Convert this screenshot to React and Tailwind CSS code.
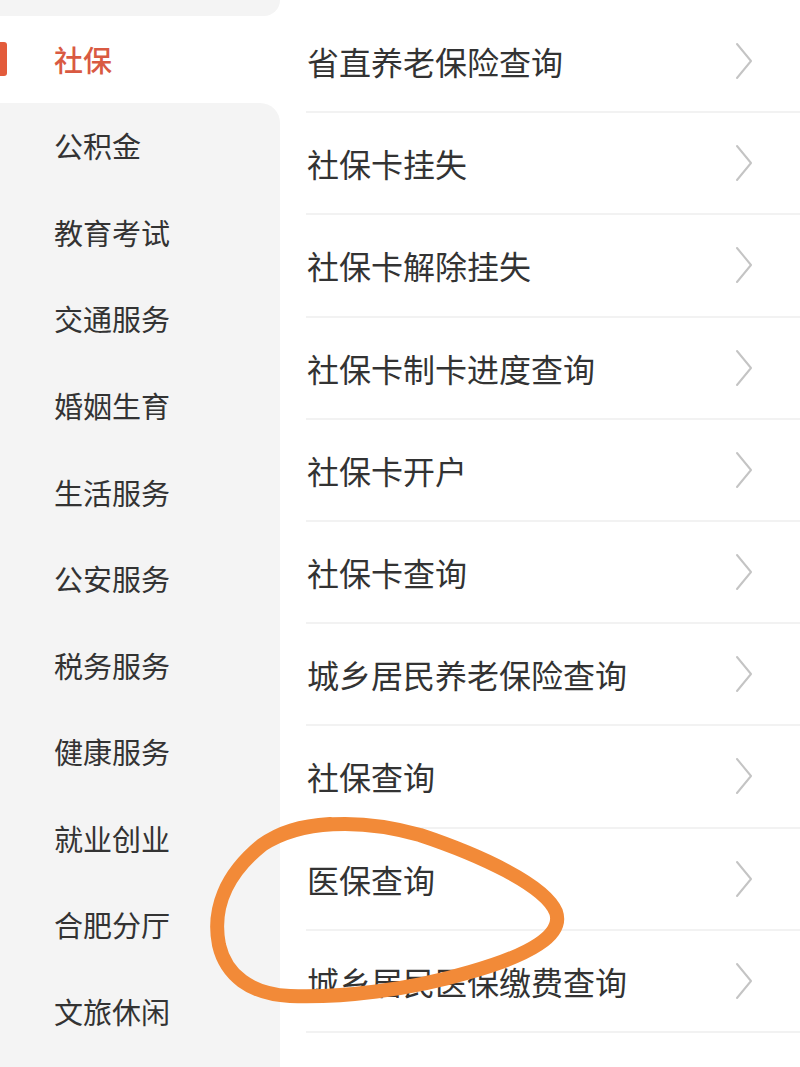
import React from 'react';

const categories = ['社保', '公积金', '教育考试', '交通服务', '婚姻生育', '生活服务', '公安服务', '税务服务', '健康服务', '就业创业', '合肥分厅', '文旅休闲'];

const services = ['省直养老保险查询', '社保卡挂失', '社保卡解除挂失', '社保卡制卡进度查询', '社保卡开户', '社保卡查询', '城乡居民养老保险查询', '社保查询', '医保查询', '城乡居民医保缴费查询'];

function Chevron() {
    return (
        <svg width="20" height="38" viewBox="0 0 20 38" fill="none" className="shrink-0">
            <path d="M3 2 L17 19 L3 36" stroke="#c4c4c4" strokeWidth="2" strokeLinecap="round" strokeLinejoin="round" />
        </svg>
    );
}

export default function App() {
    const active = 0;
    return (
        <div className="relative w-[800px] h-[1067px] overflow-hidden bg-white flex text-[#333]" style={{ fontFamily: '"Noto Sans CJK SC", "Noto Sans", sans-serif' }}>
            {/* left category column */}
            <div className="w-[280px] shrink-0 flex flex-col bg-white">
                <div className="h-[16px] bg-[#f4f4f4] rounded-br-[20px]" />
                {categories.map((c, i) => (
                    <div
                        key={c}
                        className={
                            'relative h-[86.6px] shrink-0 flex items-center pl-[54px] text-[29px] ' +
                            (i === active ? 'bg-white text-[#d95a42] font-medium' : 'bg-[#f4f4f4]') +
                            (i === active + 1 ? ' rounded-tr-[20px]' : '')
                        }
                    >
                        {i === active && <span className="absolute left-0 top-[26px] w-[7px] h-[34px] rounded-r-[3px] bg-[#e35b3b]" />}
                        {c}
                    </div>
                ))}
                <div className="flex-1 bg-[#f4f4f4]" />
            </div>

            {/* right service list */}
            <div className="flex-1 flex flex-col pl-[26px] mt-[11px]">
                {services.map((s) => (
                    <div key={s} className="h-[102.2px] shrink-0 flex items-center justify-between pr-[46px] border-b-2 border-[#f2f2f2] text-[32px]">
                        <span className="pl-[1px]">{s}</span>
                        <Chevron />
                    </div>
                ))}
            </div>

            {/* hand-drawn annotation */}
            <svg className="absolute inset-0 pointer-events-none" width="800" height="1067" viewBox="0 0 800 1067">
                <path
                    d="M262 845 C300 820 360 818 420 835 C480 855 545 885 556 912 C564 935 530 955 470 972 C410 990 340 998 290 996 C250 994 226 975 219 945 C212 910 225 875 262 845 C280 832 300 826 330 824"
                    fill="none"
                    stroke="#f28a38"
                    strokeWidth="14"
                    strokeLinecap="round"
                    strokeLinejoin="round"
                />
            </svg>
        </div>
    );
}
